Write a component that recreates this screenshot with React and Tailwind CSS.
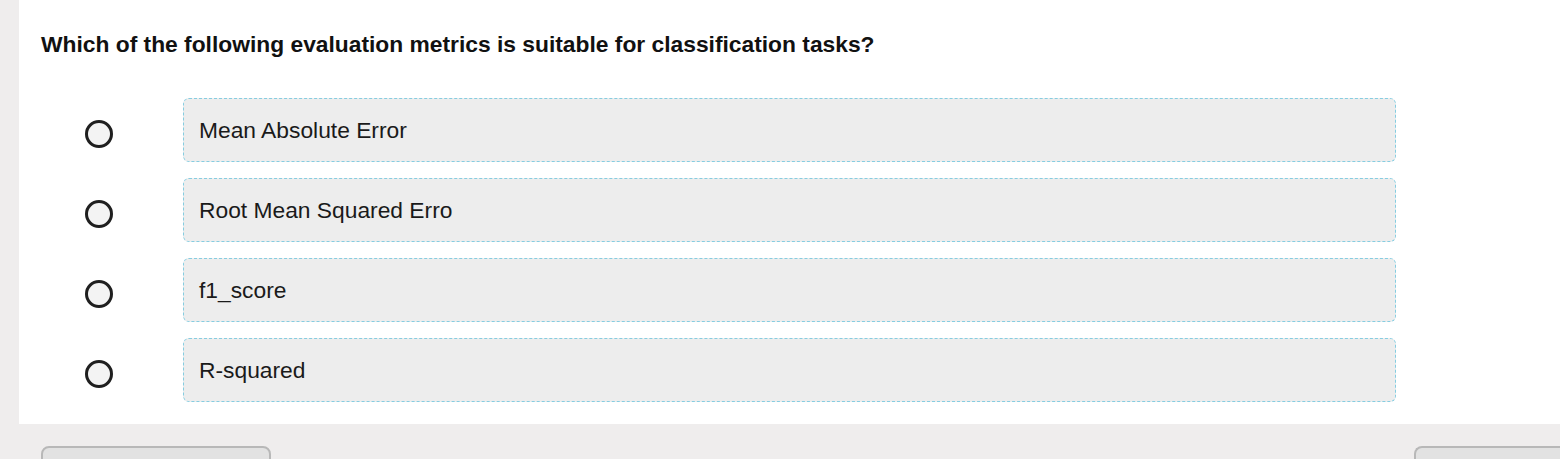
import React from 'react';

const options = ['Mean Absolute Error', 'Root Mean Squared Erro', 'f1_score', 'R-squared'];

export default function App() {
  return (
    <div className="w-[1560px] h-[459px] overflow-hidden bg-[#efeded] font-['Liberation_Sans',Arial,sans-serif]">
      <div className="ml-[19px] h-[424px] bg-white pt-[29px] pl-[22px]">
        <h1 className="text-[22.8px] font-bold text-[#111] leading-[30px]">
          Which of the following evaluation metrics is suitable for classification tasks?
        </h1>
        <div className="mt-[39px] flex flex-col gap-[16px]">
          {options.map((opt) => (
            <label key={opt} className="flex items-center">
              <span className="w-[142px] flex justify-start pl-[44px] pt-[8px]">
                <span className="w-[28px] h-[28px] rounded-full border-[3px] border-[#1f1f1f] bg-[#f3f3f3]" />
              </span>
              <span className="w-[1213px] h-[64px] flex items-center px-[15px] bg-[#ededed] border border-dashed border-[#86cde1] rounded-[6px] text-[22.8px] text-[#1a1a1a]">
                {opt}
              </span>
            </label>
          ))}
        </div>
      </div>
      <div className="flex justify-between pt-[22px] pl-[41px]">
        <button className="w-[230px] h-[40px] rounded-[8px] border-2 border-[#b8b8b8] bg-[#e2e2e2]" />
        <button className="w-[160px] h-[40px] rounded-l-[8px] border-2 border-r-0 border-[#b8b8b8] bg-[#e2e2e2] mr-[-14px]" />
      </div>
    </div>
  );
}
